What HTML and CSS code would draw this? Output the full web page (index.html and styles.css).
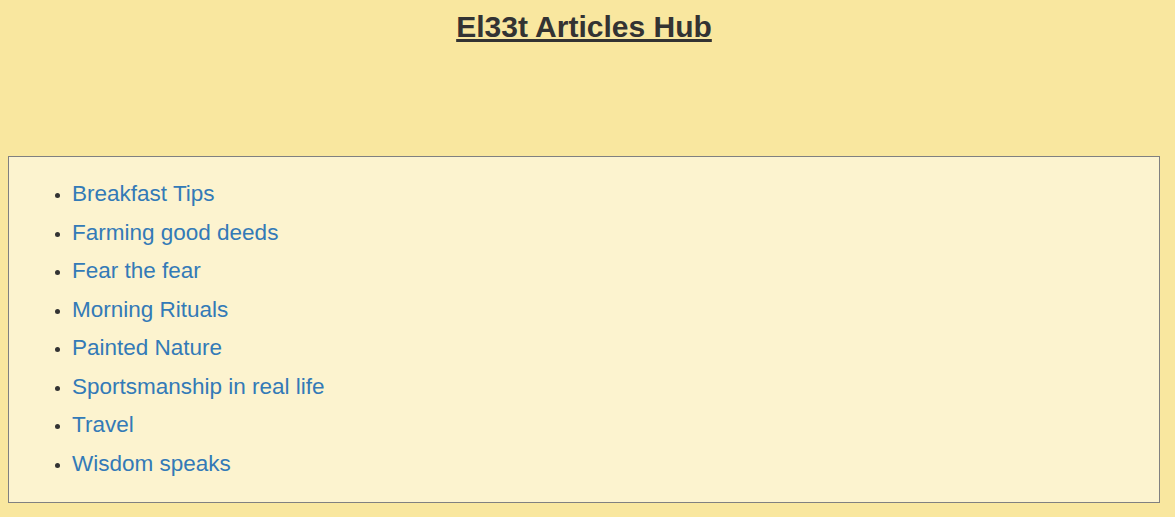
FILE: index.html
```html
<!DOCTYPE html>
<html>
<head>
<meta charset="utf-8">
<title>El33t Articles Hub</title>
<link rel="stylesheet" href="styles.css">
</head>
<body>
<header class="header">
  <h1 class="title">El33t Articles Hub</h1>
</header>
<main class="box">
  <ul class="list">
    <li><a href="#">Breakfast Tips</a></li>
    <li><a href="#">Farming good deeds</a></li>
    <li><a href="#">Fear the fear</a></li>
    <li><a href="#">Morning Rituals</a></li>
    <li><a href="#">Painted Nature</a></li>
    <li><a href="#">Sportsmanship in real life</a></li>
    <li><a href="#">Travel</a></li>
    <li><a href="#">Wisdom speaks</a></li>
  </ul>
</main>
</body>
</html>
```
FILE: styles.css
```css
html, body {
  background: #f9e79f;
}
body {
  margin: 0 15px 0 8px;
  font-family: "Liberation Sans", Arial, sans-serif;
  color: #333;
}
.header {
  height: 156px;
}
.title {
  margin: 0;
  padding-top: 8px;
  text-align: center;
  font-size: 30px;
  line-height: 38px;
  font-weight: bold;
  text-decoration: underline;
  color: #333;
}
.box {
  background: #fcf3cf;
  border: 1px solid #808080;
}
.list {
  margin: 0;
  padding: 18px 0 19px 63px;
}
.list li {
  font-size: 22.5px;
  line-height: 38.5px;
  color: #333;
}
.list li::marker {
  font-size: 17px;
}
.list a {
  color: #337ab7;
  text-decoration: none;
}
```
